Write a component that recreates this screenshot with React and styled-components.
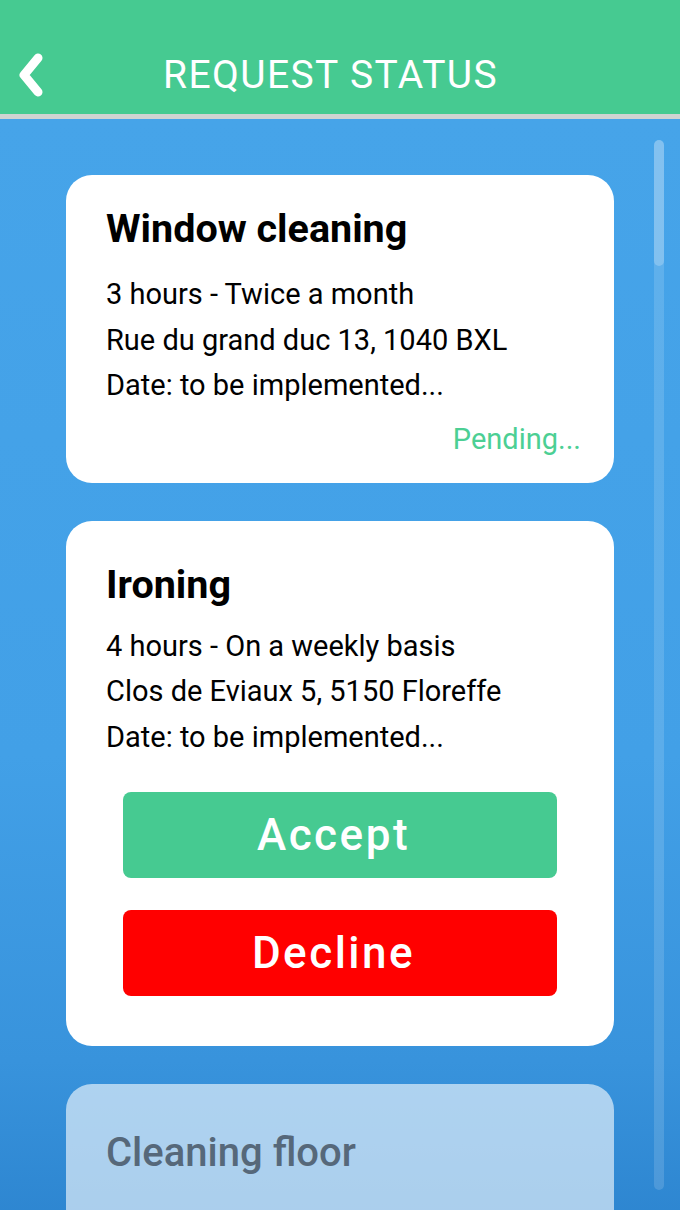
import React from "react";
import styled, { createGlobalStyle } from "styled-components";

const Global = createGlobalStyle`
  html, body { margin: 0; padding: 0; }
  body { font-family: Roboto, "Noto Sans", sans-serif; overflow: hidden; }
`;

const Screen = styled.div`
  width: 680px;
  height: 1210px;
  display: flex;
  flex-direction: column;
  overflow: hidden;
  position: relative;
`;

const Header = styled.header`
  box-sizing: content-box;
  height: 78px;
  padding-top: 36px;
  background: #46ca91;
  border-bottom: 5px solid #d0d3d2;
  display: flex;
  align-items: center;
  flex-shrink: 0;
`;

const BackButton = styled.button`
  background: none;
  border: none;
  padding: 0;
  margin-left: 19px;
  width: 24px;
  height: 44px;
  display: flex;
  align-items: center;
  justify-content: center;
  cursor: pointer;
`;

const Title = styled.h1`
  margin: 0 0 0 120px;
  color: #fff;
  font-family: Roboto, sans-serif;
  font-weight: 400;
  font-size: 39px;
  line-height: 46px;
  letter-spacing: 1.4px;
`;

const Content = styled.main`
  flex: 1;
  background: linear-gradient(180deg, #46a4e9 0%, #42a0e7 50%, #3893dc 74%, #2c84cf 88%, #1b6bb4 100%);
  padding: 56px 66px 0;
  display: flex;
  flex-direction: column;
  gap: 38px;
  position: relative;
`;

const Card = styled.section`
  background: ${(p) => (p.$faded ? "rgba(255,255,255,0.6)" : "#fff")};
  border-radius: 26px;
  padding: ${(p) => p.$top}px 40px ${(p) => p.$bottom}px;
  display: flex;
  flex-direction: column;
  flex-shrink: 0;
`;

const CardTitle = styled.h2`
  margin: 0 0 ${(p) => p.$gap}px;
  font-family: Roboto, sans-serif;
  font-weight: ${(p) => (p.$faded ? 500 : 700)};
  font-size: ${(p) => (p.$faded ? 40 : 39.5)}px;
  line-height: 48px;
  color: ${(p) => (p.$faded ? "#56687a" : "#000")};
`;

const Line = styled.p`
  margin: 0;
  font-family: Roboto, sans-serif;
  font-size: 29px;
  line-height: 45.5px;
  color: #000;
`;

const Status = styled.div`
  text-align: right;
  color: #4ccf94;
  font-size: 29px;
  line-height: 40px;
  margin-top: 10px;
  margin-right: -7px;
`;

const Actions = styled.div`
  display: flex;
  flex-direction: column;
  gap: 32px;
  padding: 0 17px;
  margin-top: 32px;
`;

const ActionButton = styled.button`
  height: 86px;
  border: none;
  border-radius: 8px;
  background: ${(p) => (p.$variant === "decline" ? "#ff0000" : "#46ca91")};
  color: #fff;
  font-family: Roboto, sans-serif;
  font-weight: 500;
  font-size: 44px;
  letter-spacing: 2.5px;
  padding: 0 13px 0 0;
  cursor: pointer;
`;

const ScrollTrack = styled.div`
  position: absolute;
  top: 21px;
  right: 16px;
  width: 10px;
  height: 1050px;
  border-radius: 5px;
  background: rgba(255, 255, 255, 0.14);
`;

const ScrollThumb = styled.div`
  width: 100%;
  height: 126px;
  border-radius: 5px;
  background: rgba(255, 255, 255, 0.22);
`;

const Spacer = styled.div`
  height: 200px;
`;

const requests = [
  {
    title: "Window cleaning",
    lines: ["3 hours - Twice a month", "Rue du grand duc 13, 1040 BXL", "Date: to be implemented..."],
    status: "Pending...",
    top: 30,
    bottom: 24,
    gap: 19,
  },
  {
    title: "Ironing",
    lines: ["4 hours - On a weekly basis", "Clos de Eviaux 5, 5150 Floreffe", "Date: to be implemented..."],
    actions: true,
    top: 40,
    bottom: 50,
    gap: 15,
  },
  {
    title: "Cleaning floor",
    lines: [],
    faded: true,
    top: 45,
    bottom: 0,
    gap: 15,
  },
];

export default function App() {
  return (
    <Screen>
      <Global />
      <Header>
        <BackButton aria-label="Back">
          <svg width="24" height="44" viewBox="0 0 24 44">
            <path d="M19 5 L5 22 L19 39" fill="none" stroke="#fff" strokeWidth="9" strokeLinecap="round" strokeLinejoin="round" />
          </svg>
        </BackButton>
        <Title>REQUEST STATUS</Title>
      </Header>
      <Content>
        {requests.map((r) => (
          <Card key={r.title} $faded={r.faded} $top={r.top} $bottom={r.bottom}>
            <CardTitle $faded={r.faded} $gap={r.gap}>{r.title}</CardTitle>
            {r.lines.map((l) => (
              <Line key={l}>{l}</Line>
            ))}
            {r.status && <Status>{r.status}</Status>}
            {r.actions && (
              <Actions>
                <ActionButton>Accept</ActionButton>
                <ActionButton $variant="decline">Decline</ActionButton>
              </Actions>
            )}
            {r.faded && <Spacer />}
          </Card>
        ))}
        <ScrollTrack>
          <ScrollThumb />
        </ScrollTrack>
      </Content>
    </Screen>
  );
}
